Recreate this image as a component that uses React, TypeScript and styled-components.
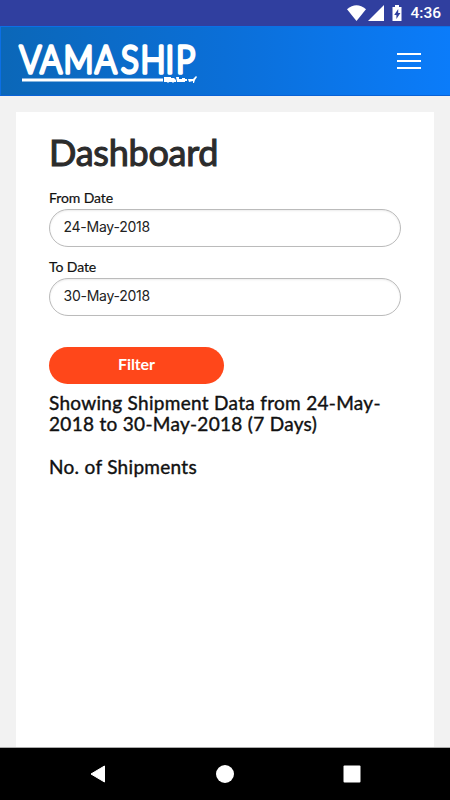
import React from 'react';
import styled, { createGlobalStyle } from 'styled-components';

const GlobalStyle = createGlobalStyle`
  * { box-sizing: border-box; }
  body { margin: 0; background: #f2f2f2; font-family: Lato, sans-serif; }
`;

const Screen = styled.div`
  width: 450px;
  height: 800px;
  display: flex;
  flex-direction: column;
  overflow: hidden;
  background: #f2f2f2;
`;

const StatusBar = styled.div`
  height: 26px;
  flex: none;
  background: #303f9f;
  display: flex;
  align-items: center;
  justify-content: flex-end;
  padding-right: 9px;
  color: #fff;
`;

const Clock = styled.span`
  font: 500 15.5px/28px Roboto, sans-serif;
  margin-left: 6px;
`;

const Header = styled.header`
  height: 70px;
  flex: none;
  display: flex;
  justify-content: space-between;
  padding: 11px 29px 0 15px;
  background: linear-gradient(90deg, #0b67b8 0%, #0b6fd8 50%, #0b7cfa 100%);
  border: 1px solid #0b6fe6;
  border-bottom-color: #0a62d6;
  border-right: 0;
`;

const MenuButton = styled.div`
  width: 24px;
  height: 16px;
  margin-top: 15px;
  display: flex;
  flex-direction: column;
  justify-content: space-between;
`;

const MenuLine = styled.span`
  height: 2px;
  background: #fff;
`;

const Card = styled.main`
  flex: 1;
  margin: 16px 16px 0;
  padding: 19px 33px 0;
  background: #fff;
`;

const Title = styled.h1`
  margin: 0;
  font-size: 36px;
  line-height: 42px;
  height: 58px;
  font-weight: 400;
  letter-spacing: -0.25px;
  color: #2c2c2c;
  -webkit-text-stroke: 1.1px #2c2c2c;
`;

const Field = styled.div`
  height: 69px;
`;

const Label = styled.label`
  display: block;
  height: 20px;
  font-size: 14px;
  line-height: 17px;
  letter-spacing: -0.1px;
  color: #111;
  -webkit-text-stroke: 0.2px #111;
`;

const Input = styled.div`
  height: 38px;
  width: 352px;
  border: 1px solid #bbb;
  border-radius: 19px;
  box-shadow: inset 0 1px 2px rgba(0, 0, 0, 0.08);
  padding-left: 13.5px;
  font: 400 14px/34px Inter, sans-serif;
  letter-spacing: -0.25px;
  color: #222;
`;

const FilterButton = styled.div`
  width: 175px;
  height: 37px;
  margin-top: 20px;
  border-radius: 19px;
  background: #ff471a;
  color: #fff;
  text-align: center;
  font-size: 16px;
  font-weight: 700;
  letter-spacing: -0.1px;
  line-height: 34px;
`;

const Heading = styled.h2<{ $gap: number }>`
  margin: ${({ $gap }) => $gap}px 0 0;
  font-size: 19px;
  line-height: 21px;
  font-weight: 400;
  color: #111;
  white-space: nowrap;
  letter-spacing: 0.3px;
  -webkit-text-stroke: 0.4px #111;
`;

const NavBar = styled.nav`
  height: 53px;
  flex: none;
  background: #000;
  border-top: 1px solid #aaa;
  display: flex;
  align-items: center;
  justify-content: space-between;
  padding: 0 89px;
`;

const WordMark = styled.text`
  font: 300 38px Lato, sans-serif;
  fill: #fff;
  stroke: #fff;
  stroke-width: 3.4px;
  stroke-linejoin: round;
  stroke-linecap: round;
  text-anchor: middle;
  vector-effect: non-scaling-stroke;
`;

const Logo = () => (
  <svg width="184" height="54" viewBox="0 -3 184 54" overflow="visible">
    <WordMark transform="scale(0.87 1)" x="16.6 40.3 71.8 103.2 130.8 157.5 176.8 195" y="32.2">VAMASHIP</WordMark>
    <path d="M6 37.5h141v3H6z" fill="#fff" />
    <path d="M148 36h7v1h3l2 2v2h-2l-1 1-1-1h-3l-1 1-1-1h-3zM160 36h3v2h3v-1h3v1h2v2h-2v1h-8zM172 38l5 0 3-3 1 1-2 3-1 3h-1l0-2-4 1z" fill="#fff" />
  </svg>
);

export default function App() {
  return (
    <>
      <GlobalStyle />
      <Screen>
        <StatusBar>
          <svg width="57" height="18" viewBox="0 0 57 18" fill="#fff">
            <path d="M0 5.2Q9.5-2.5 19 5.2L9.5 17z" />
            <path d="M37 1v16H21z" />
            <path fillRule="evenodd" d="M48 1h4v2h2.5v14h-9V3H48zM51.2 5l-4 6h2.2v4l4-6h-2.2z" />
          </svg>
          <Clock>4:36</Clock>
        </StatusBar>
        <Header>
          <Logo />
          <MenuButton><MenuLine /><MenuLine /><MenuLine /></MenuButton>
        </Header>
        <Card>
          <Title>Dashboard</Title>
          <Field><Label>From Date</Label><Input>24-May-2018</Input></Field>
          <Field><Label>To Date</Label><Input>30-May-2018</Input></Field>
          <FilterButton>Filter</FilterButton>
          <Heading $gap={8}>Showing Shipment Data from 24-May-<br />2018 to 30-May-2018 (7 Days)</Heading>
          <Heading $gap={22}>No. of Shipments</Heading>
        </Card>
        <NavBar>
          <svg width="18" height="18" viewBox="0 0 18 18"><path d="M15.5 1v16L2 9z" fill="#fff" stroke="#fff" strokeLinejoin="round" /></svg>
          <svg width="18" height="18" viewBox="0 0 18 18"><circle cx="9" cy="9" r="9" fill="#fff" /></svg>
          <svg width="18" height="18" viewBox="0 0 18 18"><rect x=".5" y=".5" width="17" height="17" rx="1" fill="#fff" /></svg>
        </NavBar>
      </Screen>
    </>
  );
}
